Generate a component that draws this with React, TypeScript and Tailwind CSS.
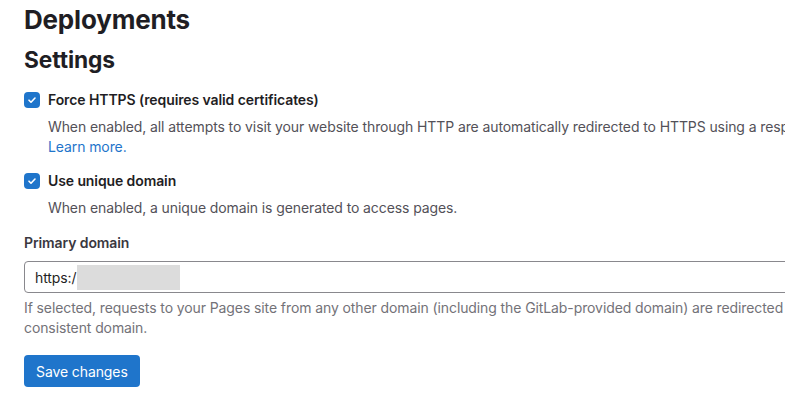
import React from 'react';

const font = { fontFamily: 'Inter, "Noto Sans", sans-serif' };

const Check = () => (
  <span className="mt-[2px] flex h-4 w-4 shrink-0 items-center justify-center rounded-[4px] bg-[#1f75cb]">
    <svg width="10" height="10" viewBox="0 0 10 10" fill="none">
      <path d="M2 5.2l2 2L8 3" stroke="white" strokeWidth="1.6" strokeLinecap="round" strokeLinejoin="round" />
    </svg>
  </span>
);

export default function App() {
  return (
    <div className="h-[396px] w-[785px] overflow-hidden bg-white" style={font}>
      <div className="w-[1300px] px-6 pt-[4px] text-[#1f1e24] tracking-[-0.1px]">
        <h1 className="text-[26px] font-bold leading-[32px] tracking-[-0.2px]">Deployments</h1>
        <h2 className="mt-[10px] text-[22.75px] font-bold leading-[28px]">Settings</h2>

        <div className="mt-[16px] flex gap-2">
          <Check />
          <div>
            <div className="text-[14px] font-semibold leading-5">Force HTTPS (requires valid certificates)</div>
            <p className="mt-[7px] whitespace-nowrap text-[14px] leading-5 text-[#535158]">
              When enabled, all attempts to visit your website through HTTP are automatically redirected to HTTPS using a response with status code 301. Requires a valid certificate for all domains.
            </p>
            <a className="block text-[14px] leading-5 text-[#1f75cb]">Learn more.</a>
          </div>
        </div>

        <div className="mt-[14px] flex gap-2">
          <Check />
          <div>
            <div className="text-[14px] font-semibold leading-5">Use unique domain</div>
            <p className="mt-[7px] text-[14px] leading-5 text-[#535158]">
              When enabled, a unique domain is generated to access pages.
            </p>
          </div>
        </div>

        <div className="mt-[15px] text-[14px] font-semibold leading-5 text-[#3a383f]">Primary domain</div>
        <div className="mt-[8px] flex h-8 w-[1000px] items-center rounded-[4px] border border-[#89888d] px-[10px] text-[14px]">
          <span className="text-[#1f1e24]">https:/</span>
          <span className="ml-[1px] h-[25px] w-[103px] bg-[#dcdcdc]" />
        </div>
        <p className="mt-[5px] whitespace-nowrap text-[14px] leading-5 text-[#737278]">
          If selected, requests to your Pages site from any other domain (including the GitLab-provided domain) are redirected to the primary domain. This ensures a
          <br />
          consistent domain.
        </p>
        <button className="mt-[17px] h-8 rounded-[4px] bg-[#1f75cb] px-3 text-[14px] text-white">Save changes</button>
      </div>
    </div>
  );
}
